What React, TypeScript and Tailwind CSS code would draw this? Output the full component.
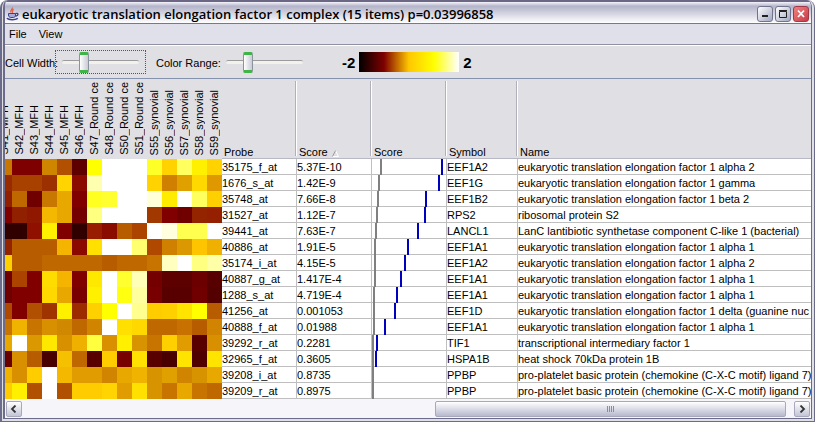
import React from "react";

type Row = {
  probe: string;
  score: string;
  grey: number;
  blue: number | null;
  symbol: string;
  name: string;
  heat: string;
};

const samples = [
  "S41_MFH", "S42_MFH", "S43_MFH", "S44_MFH", "S45_MFH", "S46_MFH",
  "S47_Round ce", "S48_Round ce", "S50_Round ce", "S51_Round ce",
  "S55_synovial", "S56_synovial", "S57_synovial", "S58_synovial", "S59_synovial",
];

const EF = "eukaryotic translation elongation factor 1 ";
const PPBP = "pro-platelet basic protein (chemokine (C-X-C motif) ligand 7)";

const rows: Row[] = [
  { probe: "35175_f_at", score: "5.37E-10", grey: 8, blue: 69, symbol: "EEF1A2", name: EF + "alpha 2", heat: "c87800 7f0000 7f0000 d08500 b05000 5f0000 ffff00 ffffff ffffff ffffff ffff28 ffd200 ffff60 fff000 ffd200" },
  { probe: "1676_s_at", score: "1.42E-9", grey: 6, blue: 66, symbol: "EEF1G", name: EF + "gamma", heat: "982c00 a84000 a84000 9c3000 ffd400 8a0a00 ffffb0 ffffff ffffff ffffff ffd200 d08000 e0a000 ffd800 e09800" },
  { probe: "35748_at", score: "7.66E-8", grey: 5, blue: 53, symbol: "EEF1B2", name: EF + "beta 2", heat: "902000 c06800 700000 c87800 e8a800 800000 ffff20 ffff30 ffffff ffffff ffffd8 ffec00 ffffff ffff60 ffd000" },
  { probe: "31527_at", score: "1.12E-7", grey: 4, blue: 52, symbol: "RPS2", name: "ribosomal protein S2", heat: "800000 902000 901800 f4b800 e8a800 740000 ffff80 ffffff ffffff ffffff a03800 800000 700000 942400 942000" },
  { probe: "39441_at", score: "7.63E-7", grey: 3, blue: 45, symbol: "LANCL1", name: "LanC lantibiotic synthetase component C-like 1 (bacterial)", heat: "300000 300000 901000 fff000 800000 300000 981c00 8a0c00 b85c00 ac4400 ffffff ffffe0 ffff50 ffff50 ffffff" },
  { probe: "40886_at", score: "1.91E-5", grey: 2, blue: 35, symbol: "EEF1A1", name: EF + "alpha 1", heat: "942400 b85c00 b85c00 b85c00 f4b400 8a0800 ffe000 ffffff ffffff ffff70 b04800 d08000 dc9800 ffc400 f0b000" },
  { probe: "35174_i_at", score: "4.15E-5", grey: 2, blue: 32, symbol: "EEF1A2", name: EF + "alpha 2", heat: "ffd000 b85c00 b85c00 c06800 c06800 c06800 c06800 b85c00 c06800 c06800 c87400 ffffc0 ffffff ffff80 ffffa8" },
  { probe: "40887_g_at", score: "1.417E-4", grey: 2, blue: 28, symbol: "EEF1A1", name: EF + "alpha 1", heat: "700000 ac4400 800000 ffdc00 f4b400 800000 ffe800 ffffff ffff30 ffffb8 740000 5c0000 5c0000 6c0000 580000" },
  { probe: "1288_s_at", score: "4.719E-4", grey: 1, blue: 24, symbol: "EEF1A1", name: EF + "alpha 1", heat: "700000 800000 800000 ffd800 e8a800 780000 fff000 ffffff ffff10 ffffa0 780000 580000 580000 700000 540000" },
  { probe: "41256_at", score: "0.001053", grey: 1, blue: 22, symbol: "EEF1D", name: EF + "delta (guanine nuc", heat: "b04800 800000 b05000 a03400 fff000 9c2c00 ffd000 ffff00 ffffff ffff90 ffcc00 ffd000 ffe400 ffff00 b85c00" },
  { probe: "40888_f_at", score: "0.01988", grey: 1, blue: 12, symbol: "EEF1A1", name: EF + "alpha 1", heat: "c87400 f0b400 c87400 d89000 d08800 c06800 d08400 ffffff ffe000 ffd800 c06800 c06800 c87000 b85c00 d08400" },
  { probe: "39292_r_at", score: "0.2281", grey: 0, blue: 4, symbol: "TIF1", name: "transcriptional intermediary factor 1", heat: "e8a800 ffffff dc9800 ffe800 d89000 f0b000 ffff40 d89000 fff000 d89400 c87400 ffd000 e09c00 580000 d89000" },
  { probe: "32965_f_at", score: "0.3605", grey: 0, blue: 3, symbol: "HSPA1B", name: "heat shock 70kDa protein 1B", heat: "680000 d89000 b85c00 480000 f4c000 c06800 580000 ffcc00 780000 ffe000 580000 480000 ffe400 500000 ffe400" },
  { probe: "39208_i_at", score: "0.8735", grey: 0, blue: null, symbol: "PPBP", name: PPBP, heat: "f0b400 d89000 ffcc00 ffffff f4b800 e09c00 e09c00 d08400 e8a800 f0b400 d89400 e0a000 d08400 d89400 e8a800" },
  { probe: "39209_r_at", score: "0.8975", grey: 0, blue: null, symbol: "PPBP", name: PPBP, heat: "ffcc00 fff000 b05000 ffffff b05000 ffcc00 ffcc00 ffd400 e09c00 ffe000 d89400 c87400 e8a800 c87400 c06800" },
];

function JavaIcon() {
  return (
    <svg viewBox="0 0 14 14" className="h-[14px] w-[14px] shrink-0" fill="none" aria-hidden="true">
      <path d="M6 0.5C7.500 2 3.500 3 5 5.500M7.500 2C6 3.500 7 4.500 6.300 6" stroke="#e2604a" strokeWidth="1.3" />
      <path d="M2.500 6.500h7v1.500c0 1.500-1 2.500-2 2.500h-3c-1 0-2-1-2-2.500z" fill="#a9acd8" stroke="#3c4090" />
      <path d="M9.500 6.500c3-1 3.500 1.800 0 2.800" stroke="#3c4090" strokeWidth="1.3" />
      <path d="M0.800 11.300c2 1.800 8.500 1.800 11 0" stroke="#3c4090" strokeWidth="1.5" />
    </svg>
  );
}

function Slider({ id, focused }: { id: string; focused?: boolean }) {
  return (
    <div className={"flex h-6 w-[91px] shrink-0 items-center border border-dotted px-[6px] " + (focused ? "border-[#555]" : "border-transparent")}>
      <input
        id={id}
        type="range"
        min={0}
        max={100}
        defaultValue={25}
        className="h-[21px] w-full appearance-none bg-transparent outline-none [&::-webkit-slider-runnable-track]:h-1 [&::-webkit-slider-runnable-track]:rounded-xs [&::-webkit-slider-runnable-track]:border-t [&::-webkit-slider-runnable-track]:border-[#9c9ca0] [&::-webkit-slider-runnable-track]:bg-[#f3f2ea] [&::-webkit-slider-thumb]:-mt-[9px] [&::-webkit-slider-thumb]:h-[21px] [&::-webkit-slider-thumb]:w-[10px] [&::-webkit-slider-thumb]:appearance-none [&::-webkit-slider-thumb]:rounded-xs [&::-webkit-slider-thumb]:border [&::-webkit-slider-thumb]:border-y-3 [&::-webkit-slider-thumb]:border-x-[#8a949c] [&::-webkit-slider-thumb]:border-y-[#3fb548] [&::-webkit-slider-thumb]:bg-linear-to-r [&::-webkit-slider-thumb]:from-white [&::-webkit-slider-thumb]:to-[#c9cbd6]"
      />
    </div>
  );
}

const caption = "flex h-4 w-4 items-center justify-center rounded-[3px] border ";
const greyCaption = "border-[#70748e] bg-linear-to-br from-white to-[#a4a8c2]";
const th = "relative border-b border-[#b8b8c4] p-0 pl-[2px] text-left align-bottom leading-[11px] font-normal";
const cell = "overflow-hidden border-b border-[#bfbfbf] p-0 pt-px leading-[14px] whitespace-nowrap";
const td = cell + " border-r";

function Divider() {
  return <span className="absolute top-[2px] right-0 bottom-[2px] w-[2px] border-l border-[#b0b0bc] bg-white" />;
}

export default function App() {
  return (
    <div className="flex w-full flex-col overflow-hidden rounded-t-lg border-r-4 border-b-4 border-l-5 border-double border-[#6b6c8c] bg-[#e0dfe3] font-['Liberation_Sans',Arial,sans-serif] text-[11px] leading-[15px] text-black">
      <header className="flex h-6 items-center gap-[2px] border-t-2 border-b border-t-[#6b6784] border-b-[#77778f] bg-linear-to-b from-[#f4f4fa] via-[#b4b4ca] via-20% to-white pt-[2px] pr-[2px] pl-px">
        <JavaIcon />
        <h1 className="flex-1 font-['Open_Sans','Noto_Sans',sans-serif] text-[13px] leading-5 font-semibold whitespace-nowrap">
          eukaryotic translation elongation factor 1 complex (15 items) p=0.03996858
        </h1>
        <div className="flex gap-[2px]">
          <button type="button" aria-label="Minimize" className={caption + greyCaption}>
            <svg viewBox="0 0 14 14" className="h-[14px] w-[14px]"><path d="M4 8h6v2H4z" fill="#222" /></svg>
          </button>
          <button type="button" aria-label="Maximize" className={caption + greyCaption}>
            <svg viewBox="0 0 14 14" className="h-[14px] w-[14px]"><path d="M3.500 4.500h7v6h-7zM3 3.500h8" fill="none" stroke="#222" /></svg>
          </button>
          <button type="button" aria-label="Close" className={caption + "border-[#a03848] bg-linear-to-br from-[#f08080] to-[#c83848]"}>
            <svg viewBox="0 0 14 14" className="h-[14px] w-[14px]"><path d="M4 3.500l6 6.500M10 3.500l-6 6.500" stroke="#fff" strokeWidth="1.8" /></svg>
          </button>
        </div>
      </header>

      <nav className="flex h-[21px] items-center gap-3 border-b border-[#9090a0] bg-[#dfe0ea] px-1">
        <button type="button">File</button>
        <button type="button">View</button>
      </nav>

      <div className="flex h-[33px] items-center border-t border-white">
        <label htmlFor="cell-width" className="w-[50px] shrink-0 pt-[2px] whitespace-nowrap">Cell Width:</label>
        <Slider id="cell-width" focused />
        <label htmlFor="color-range" className="ml-[10px] w-[63px] shrink-0 pt-[2px] whitespace-nowrap">Color Range:</label>
        <Slider id="color-range" />
        <div className="ml-8 flex items-center gap-1 text-[15px] font-bold">
          <span>-2</span>
          <div className="h-5 w-[100px] bg-[linear-gradient(to_right,#000_0%,#7f0000_25%,#ffc800_50%,#ffff00_75%,#fff_100%)]" />
          <span>2</span>
        </div>
      </div>

      <main className="overflow-hidden border-t border-[#8592ae]">
        <table className="w-full table-fixed border-separate border-spacing-0">
          <colgroup>
            <col className="w-[7px]" />
            {samples.slice(1).map((s) => (
              <col key={s} className="w-[15px]" />
            ))}
            <col className="w-[75px]" />
            <col className="w-[75px]" />
            <col className="w-[75px]" />
            <col className="w-[71px]" />
            <col />
          </colgroup>
          <thead>
            <tr className="h-20">
              {samples.map((s) => (
                <th key={s} scope="col" className="overflow-hidden p-0 pb-1 align-bottom font-normal">
                  <div className="flex justify-end">
                    <span className="block w-[15px] shrink-0 rotate-180 text-left whitespace-nowrap [writing-mode:vertical-rl]">{s}</span>
                  </div>
                </th>
              ))}
              <th scope="col" className={th}>Probe<Divider /></th>
              <th scope="col" className={th}>
                Score
                <svg viewBox="0 0 7 7" className="ml-1 inline-block h-[7px] w-[7px]" aria-hidden="true">
                  <path d="M3.500 0.500L6.500 6.500H0.500" fill="none" stroke="#fff" />
                  <path d="M3.500 0.500L0.500 6.500" stroke="#9a9aa2" />
                </svg>
                <Divider />
              </th>
              <th scope="col" className={th}>Score<Divider /></th>
              <th scope="col" className={th}>Symbol<Divider /></th>
              <th scope="col" className={th}>Name</th>
            </tr>
          </thead>
          <tbody className="bg-white">
            {rows.map((r) => (
              <tr key={r.probe} className="h-4">
                {r.heat.split(" ").map((c, i) => (
                  <td key={i} className="p-0" style={{ backgroundColor: "#" + c }} />
                ))}
                <td className={td}>{r.probe}</td>
                <td className={td}>{r.score}</td>
                <td className="border-r border-b border-[#bfbfbf] p-0">
                  <svg className="-mb-px block h-4 w-full" aria-hidden="true">
                    <rect x={r.grey} y="0" width="2" height="16" fill="#808080" />
                    {r.blue !== null && <rect x={r.blue} y="0" width="2" height="16" fill="#0000c0" />}
                  </svg>
                </td>
                <td className={td}>{r.symbol}</td>
                <td className={cell}>{r.name}</td>
              </tr>
            ))}
          </tbody>
        </table>
      </main>

      <footer className="flex h-[19px] items-center bg-[#f6f6fa] p-px">
        <button type="button" aria-label="Scroll left" className="flex h-4 w-4 items-center justify-center rounded-xs border border-[#a8a8bc] bg-linear-to-b from-white to-[#c4c5d6]">
          <svg viewBox="0 0 8 8" className="h-2 w-2"><path d="M5.500 0.500L2 4l3.500 3.500" fill="none" stroke="#333" strokeWidth="1.8" /></svg>
        </button>
        <div className="flex flex-1 justify-end pr-2">
          <div className="flex h-4 w-[46%] items-center justify-center gap-px rounded-xs border border-[#a8a8bc] bg-linear-to-b from-white to-[#b8bace]">
            {[0, 1, 2, 3].map((i) => (
              <span key={i} className="h-[6px] w-px bg-[#8a8ca4]" />
            ))}
          </div>
        </div>
        <button type="button" aria-label="Scroll right" className="flex h-4 w-4 items-center justify-center rounded-xs border border-[#a8a8bc] bg-linear-to-b from-white to-[#c4c5d6]">
          <svg viewBox="0 0 8 8" className="h-2 w-2"><path d="M2.500 0.500L6 4 2.500 7.500" fill="none" stroke="#333" strokeWidth="1.8" /></svg>
        </button>
      </footer>
    </div>
  );
}
